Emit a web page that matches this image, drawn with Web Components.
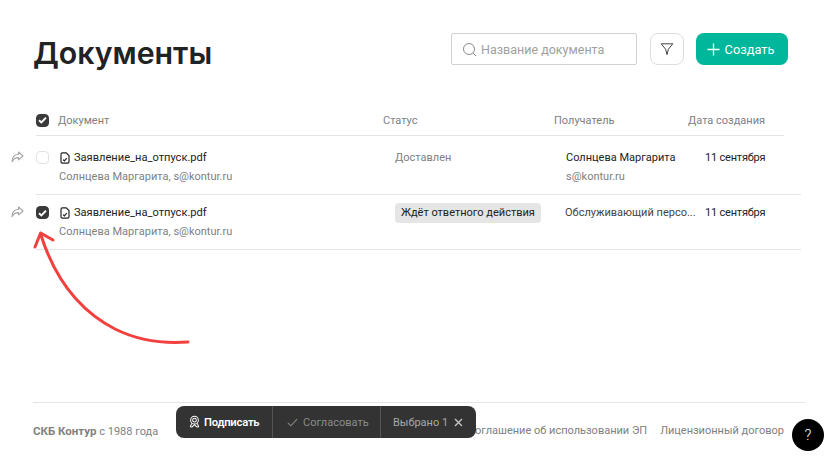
<!DOCTYPE html>
<html lang="ru"><head><meta charset="utf-8"><title>Документы</title>
<style>
html,body{margin:0;padding:0;background:#fff}
body{font-family:Roboto,"Liberation Sans",sans-serif;color:#222;width:837px;height:469px;overflow:hidden}
</style></head><body>
<doc-app></doc-app>
<script>
const def=(name,html,init)=>{customElements.define(name,class extends HTMLElement{constructor(){super();this.attachShadow({mode:'open'}).innerHTML=html}connectedCallback(){init&&init(this)}})};
const CHECK='<svg width="9" height="8" viewBox="0 0 9 8"><path d="M1 4.2 3.4 6.4 8 1.6" fill="none" stroke="#fff" stroke-width="1.9"/></svg>';
def('doc-check',`<style>:host{display:inline-flex;align-items:center;justify-content:center;width:13px;height:13px;box-sizing:border-box;border-radius:4px;border:1px solid #e2e2e2;background:#fff}
:host([on]){background:#3a3a3a;border-color:#3a3a3a}svg{display:none}:host([on]) svg{display:block}</style>${CHECK}`);
def('doc-head',`<style>:host{display:flex;align-items:center;justify-content:space-between;height:32px;margin:0 49px 0 33px}
h1{margin:0;font:600 30.3px/32px Inter,sans-serif;color:#222;padding-top:7px}
.tools{display:flex;align-items:center}
.search{display:flex;align-items:center;box-sizing:border-box;width:186px;height:32px;border:1px solid #d2d2d2;border-radius:2px;padding-left:10px;gap:4px;font-size:12.5px;color:#a0a0a0}
.filter{display:flex;align-items:center;justify-content:center;box-sizing:border-box;width:34px;height:32px;border:1px solid #dedede;border-radius:8px;margin:0 12px 0 13px}
.create{display:flex;align-items:center;justify-content:center;gap:5px;width:92px;height:32px;border-radius:8px;background:#00b79c;color:#fff;font-size:12.8px;box-sizing:border-box;padding-right:3px}
</style><h1>Документы</h1><div class="tools"><div class="search"><svg width="15" height="15" viewBox="0 0 15 15" fill="none" stroke="#8a8a8a" stroke-width="1"><circle cx="7" cy="7" r="5.5"/><path d="M11 11l3 3"/></svg><span>Название документа</span></div>
<div class="filter"><svg width="14" height="14" viewBox="0 0 14 14" fill="none" stroke="#444" stroke-width="1"><path d="M1.2 1.8h11.6L8.4 7.2 7 12.6 5.6 7.2z" stroke-linejoin="round"/></svg></div>
<div class="create"><svg width="13" height="13" viewBox="0 0 13 13" stroke="#fff" stroke-width="1.3"><path d="M6.5 .5v12M.5 6.5h12"/></svg><span>Создать</span></div></div>`);
def('doc-thead',`<style>:host{display:grid;grid-template-columns:22px 324px 172px 134px 96px;align-items:center;height:28px;margin:41px 0 0 36px;width:748px;border-bottom:1px solid #e4e4e4;padding-bottom:1px;font-size:11px;color:#808080}
span{position:relative}.n{padding-top:1px}.s{padding-left:1px}</style>
<doc-check on></doc-check><span class="n">Документ</span><span class="n s">Статус</span><span class="n">Получатель</span><span class="n">Дата создания</span>`);
def('doc-row',`<style>:host{display:flex;align-items:stretch;margin-left:11px}
.share{width:25px;flex:none;padding-top:var(--sp,15px);box-sizing:border-box}
.in{width:765px;display:grid;grid-template-columns:22px 337px 171px 139px 96px;grid-template-rows:auto auto;height:var(--h,58px);box-sizing:border-box;border-bottom:1px solid #e4e4e4;padding-top:var(--pt,15px);font-size:11px;align-content:start;row-gap:var(--gap,7px)}
.name{display:flex;align-items:center;gap:4px;color:#222;height:13px;padding-left:2px;font-size:11.1px}.sub{grid-column:2;color:#808080;height:13px;line-height:13px;padding-left:1px}
.m{line-height:13px;height:13px;letter-spacing:-.2px}
</style>
<div class="share"><svg width="13" height="12" viewBox="0 0 13 12" fill="none" stroke="#a4a4a4" stroke-width="1.1"><path d="M7.5 1 12 5 7.5 8.8V6.6C4.5 6.4 2.4 7.6 1 10.8 1 6.4 3.5 3.6 7.5 3.3z" stroke-linejoin="round"/></svg></div>
<div class="in"><slot name="check"></slot><div class="name"><svg width="10" height="12" viewBox="0 0 10 12" fill="none" stroke="#222" stroke-width="1.2"><path d="M1 2.2A1.4 1.4 0 0 1 2.4.8h3.8L9 3.6V9.8a1.4 1.4 0 0 1-1.4 1.4H2.4A1.4 1.4 0 0 1 1 9.8z"/><path d="M3 7.6l1.4 1.2 2.4-2.6"/></svg><span>Заявление_на_отпуск.pdf</span></div><slot name="status"></slot><slot name="rcpt"></slot><span class="m">11 сентября</span><span class="sub">Солнцева Маргарита, s@kontur.ru</span><slot name="rcpt2"></slot></div>`);
def('doc-footer',`<style>:host{display:flex;justify-content:space-between;align-items:center;box-sizing:border-box;margin:152px 0 0 33px;width:772px;height:56px;border-top:1px solid #e4e4e4;padding:0 21px 0 0;font-size:11px;color:#808080}
b{font-weight:700;font-size:11.5px}.r{display:flex;gap:13px}</style><span><b>СКБ Контур</b> с 1988 года</span><span class="r"><span>Соглашение об использовании ЭП</span><span>Лицензионный договор</span></span>`);
def('doc-actions',`<style>:host{position:absolute;left:176px;top:406px;display:flex;height:32px;background:#333;border-radius:8px;color:#a8a8a8;font-size:11px;align-items:stretch}
div{display:flex;align-items:center;gap:5px;box-sizing:border-box}div+div{border-left:1px solid #555}
.a{width:96px;padding-left:13px;color:#fff;font-weight:600;letter-spacing:-.2px;font-size:11.2px;gap:4px}.b{width:108px;padding-left:14px}.c{width:96px;padding-left:12px}.b span{color:#8c8c8c}</style>
<div class="a"><svg width="11" height="14" viewBox="0 0 12 14" fill="none" stroke="#fff" stroke-width="1.1"><circle cx="6" cy="5" r="4.2"/><circle cx="6" cy="5" r="2"/><path d="M3 8.5 1.5 12c1 .6 2 .6 2.6-.2L6 10l1.9 1.8c.6.8 1.6.8 2.6.2L9 8.5"/></svg><span>Подписать</span></div>
<div class="b"><svg width="11" height="9" viewBox="0 0 13 10" fill="none" stroke="#8a8a8a" stroke-width="1.2"><path d="M1 5.5 4.5 9 12 1"/></svg><span>Согласовать</span></div>
<div class="c"><span>Выбрано 1</span><svg width="9" height="9" viewBox="0 0 9 9" stroke="#c4c4c4" stroke-width="1.4" style="margin-left:1px"><path d="M1 1l7 7M8 1 1 8"/></svg></div>`);
def('doc-help',`<style>:host{position:absolute;left:792px;top:419px;width:32px;height:32px;border-radius:50%;background:#000;color:#fff;display:flex;align-items:center;justify-content:center;font-size:15px;font-weight:300}</style>?`);
def('doc-arrow',`<style>:host{position:absolute;left:0;top:0;width:837px;height:469px;pointer-events:none}svg{display:block}</style>
<svg width="837" height="469" fill="none" stroke="#f1403e" stroke-width="3" stroke-linecap="round" stroke-linejoin="round"><path d="M188 342C160 344 135 339 115 329 80 311 55 280 40.6 234"/><path d="M35 247 40.6 233 53 240"/></svg>`);
def('doc-app',`<style>:host{display:block;position:relative;box-sizing:border-box;padding-top:33px;width:837px;height:469px;overflow:hidden}
.st{display:block;color:#808080;line-height:13px}
.badge{display:inline-block;background:#e5e5e5;color:#222;border-radius:4px;padding:0 6px;height:20px;line-height:20px;margin-top:-3px;font-size:11px;justify-self:start;box-sizing:border-box}
.r{line-height:13px;color:#222}.r2{line-height:13px;color:#808080;grid-column:4}
.t{margin-left:-1px;color:#444;display:block;line-height:14px;white-space:nowrap}
#r1{--h:59px;--pt:15px;--gap:6px;--sp:12px}#r2{--h:55px;--pt:11px;--gap:2px;--sp:8px}
</style>
<doc-head></doc-head><doc-thead></doc-thead>
<doc-row id="r1"><doc-check slot="check"></doc-check><span slot="status" class="st">Доставлен</span><span slot="rcpt" class="r">Солнцева Маргарита</span><span slot="rcpt2" class="r2">s@kontur.ru</span></doc-row>
<doc-row id="r2"><doc-check slot="check" on></doc-check><span slot="status" class="badge">Ждёт ответного действия</span><span slot="rcpt" class="t">Обслуживающий персо...</span></doc-row>
<doc-footer></doc-footer><doc-actions></doc-actions><doc-help></doc-help><doc-arrow></doc-arrow>`);
</script></body></html>
